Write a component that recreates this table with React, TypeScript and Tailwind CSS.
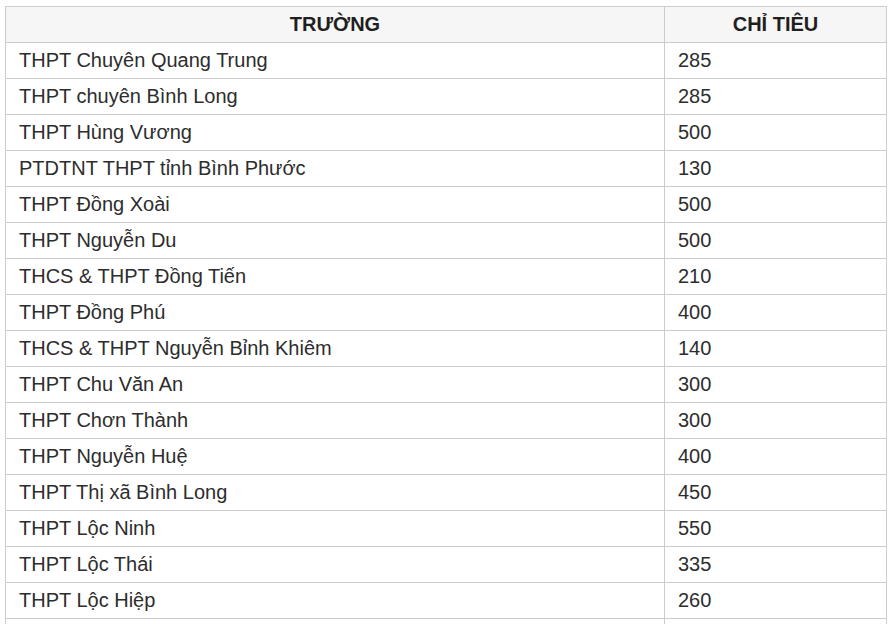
import React from 'react';

interface School {
  name: string;
  quota: number;
}

const schools: School[] = [
  { name: 'THPT Chuyên Quang Trung', quota: 285 },
  { name: 'THPT chuyên Bình Long', quota: 285 },
  { name: 'THPT Hùng Vương', quota: 500 },
  { name: 'PTDTNT THPT tỉnh Bình Phước', quota: 130 },
  { name: 'THPT Đồng Xoài', quota: 500 },
  { name: 'THPT Nguyễn Du', quota: 500 },
  { name: 'THCS & THPT Đồng Tiến', quota: 210 },
  { name: 'THPT Đồng Phú', quota: 400 },
  { name: 'THCS & THPT Nguyễn Bỉnh Khiêm', quota: 140 },
  { name: 'THPT Chu Văn An', quota: 300 },
  { name: 'THPT Chơn Thành', quota: 300 },
  { name: 'THPT Nguyễn Huệ', quota: 400 },
  { name: 'THPT Thị xã Bình Long', quota: 450 },
  { name: 'THPT Lộc Ninh', quota: 550 },
  { name: 'THPT Lộc Thái', quota: 335 },
  { name: 'THPT Lộc Hiệp', quota: 260 },
];

const cell = 'border border-[#cccccc] px-[13px] pb-[2px] text-left text-[20px] leading-none text-[#2d2d2d]';

export default function App() {
  return (
    <div className="min-h-screen bg-white pl-[5px] pt-[6px] font-['Liberation_Sans',Arial,sans-serif]">
      <table className="w-[882px] table-fixed border-collapse">
        <colgroup>
          <col className="w-[659px]" />
          <col />
        </colgroup>
        <thead>
          <tr className="h-[36px] bg-[#f6f6f6]">
            <th className="border border-[#cccccc] px-[13px] pb-[2px] text-center text-[20px] font-bold leading-none text-[#1f1f1f]">
              TRƯỜNG
            </th>
            <th className="border border-[#cccccc] px-[13px] pb-[2px] text-center text-[20px] font-bold leading-none text-[#1f1f1f]">
              CHỈ TIÊU
            </th>
          </tr>
        </thead>
        <tbody>
          {schools.map((s) => (
            <tr key={s.name} className="h-[36px]">
              <td className={cell}>{s.name}</td>
              <td className={cell}>{s.quota}</td>
            </tr>
          ))}
          {/* next row starts just above the fold */}
          <tr className="h-[36px]">
            <td className={cell}></td>
            <td className={cell}></td>
          </tr>
        </tbody>
      </table>
    </div>
  );
}
